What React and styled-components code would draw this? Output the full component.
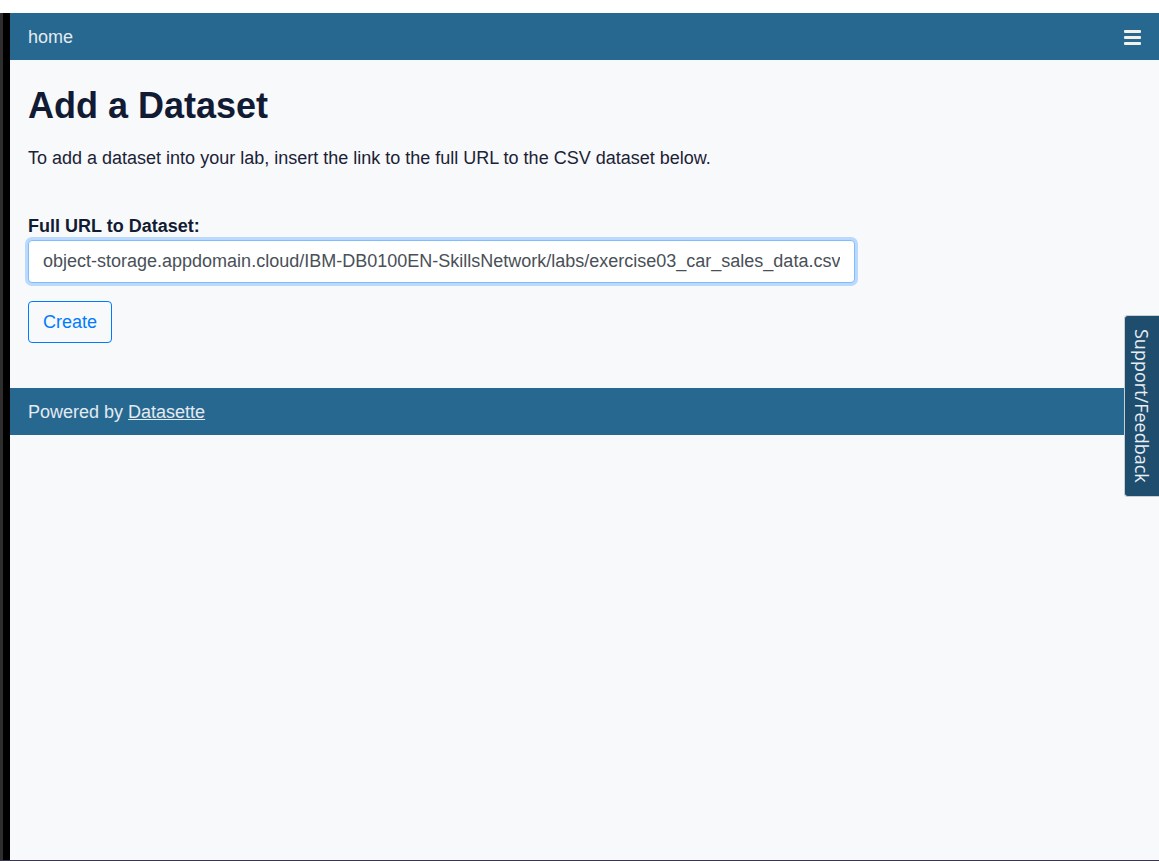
import React from 'react'
import styled, { createGlobalStyle } from 'styled-components'

const GlobalStyle = createGlobalStyle`
  html, body {
    margin: 0;
    padding: 0;
    background: #ffffff;
  }

  body {
    font-family: "Liberation Sans", Arial, sans-serif;
    overflow: hidden;
  }
`

const Frame = styled.div`
  width: 1159px;
  height: 861px;
  display: flex;
  flex-direction: column;
  padding-top: 13px;
  box-sizing: border-box;
  border-bottom: 1px solid #3b3650;
`

const Body = styled.div`
  flex: 1;
  display: flex;
  min-height: 0;
`

const Gutter = styled.div`
  width: 10px;
  flex-shrink: 0;
  background: linear-gradient(to right, #2e2e2e 0 3px, #000000 3px 10px);
`

const Main = styled.main`
  flex: 1;
  position: relative;
  background: #f8f9fb;
  display: flex;
  flex-direction: column;
`

const Bar = styled.div`
  height: 47px;
  flex-shrink: 0;
  background: #276890;
  color: #e3eaf0;
  display: flex;
  align-items: center;
  justify-content: space-between;
  padding: 1px 18px 0;
  box-sizing: border-box;
  font-size: 18px;

  a {
    color: #e3eaf0;
  }
`

const HomeLink = styled.span`
  color: #e3eaf0;
`

const Burger = styled.button`
  border: 0;
  background: none;
  padding: 0;
  display: flex;
  cursor: pointer;
`

const Content = styled.section`
  padding: 0 18px;
  color: #1b2236;
`

const Title = styled.h1`
  margin: 24px 0 0;
  font-size: 36px;
  line-height: 43px;
  font-weight: 700;
  color: #111b33;
`

const Intro = styled.p`
  margin: 19px 0 0;
  font-size: 18px;
  line-height: 24px;
`

const Label = styled.label`
  display: block;
  margin: 44px 0 2px;
  font-size: 18px;
  line-height: 24px;
  font-weight: 700;
  color: #111b33;
`

const UrlInput = styled.input`
  display: block;
  width: 827px;
  height: 43px;
  box-sizing: border-box;
  padding: 0 14px;
  font-family: "Liberation Sans", Arial, sans-serif;
  font-size: 18px;
  color: #495057;
  background: #ffffff;
  border: 1px solid #80bdff;
  border-radius: 4px;
  box-shadow: 0 0 0 3px rgba(0, 123, 255, 0.25);
  outline: none;
`

const CreateButton = styled.button`
  display: block;
  margin-top: 18px;
  height: 42px;
  padding: 0 14px;
  font-family: "Liberation Sans", Arial, sans-serif;
  font-size: 18px;
  color: #007bff;
  background: transparent;
  border: 1px solid #007bff;
  border-radius: 4px;
  cursor: pointer;
`

const Footer = styled(Bar)`
  margin-top: 45px;
  justify-content: flex-start;
  gap: 5px;
`

const SupportTab = styled.div`
  position: absolute;
  top: 302px;
  right: 0;
  width: 35px;
  height: 182px;
  box-sizing: border-box;
  background: #1e4d6e;
  border: 1px solid #c9ced3;
  border-right: 0;
  border-radius: 4px 0 0 4px;
  color: #e8eef3;
  font-family: "Open Sans", sans-serif;
  font-size: 18px;
  writing-mode: vertical-rl;
  display: flex;
  align-items: center;
  justify-content: center;
`

const MenuIcon = () => (
  <svg width="18" height="16" viewBox="0 0 18 16">
    <rect x="1" y="1" width="17" height="3" rx="1" fill="#f2f2ea" />
    <rect x="1" y="7" width="17" height="3" rx="1" fill="#f2f2ea" />
    <rect x="1" y="13" width="17" height="3" rx="1" fill="#f2f2ea" />
  </svg>
)

const App = () => (
  <Frame>
    <GlobalStyle />
    <Body>
      <Gutter />
      <Main>
        <Bar>
          <HomeLink>home</HomeLink>
          <Burger aria-label="menu"><MenuIcon /></Burger>
        </Bar>
        <Content>
          <Title>Add a Dataset</Title>
          <Intro>To add a dataset into your lab, insert the link to the full URL to the CSV dataset below.</Intro>
          <Label htmlFor="url">Full URL to Dataset:</Label>
          <UrlInput
            id="url"
            readOnly
            value="object-storage.appdomain.cloud/IBM-DB0100EN-SkillsNetwork/labs/exercise03_car_sales_data.csv"
          />
          <CreateButton>Create</CreateButton>
        </Content>
        <Footer>
          Powered by <a href="#">Datasette</a>
        </Footer>
        <SupportTab>Support/Feedback</SupportTab>
      </Main>
    </Body>
  </Frame>
)

export default App
